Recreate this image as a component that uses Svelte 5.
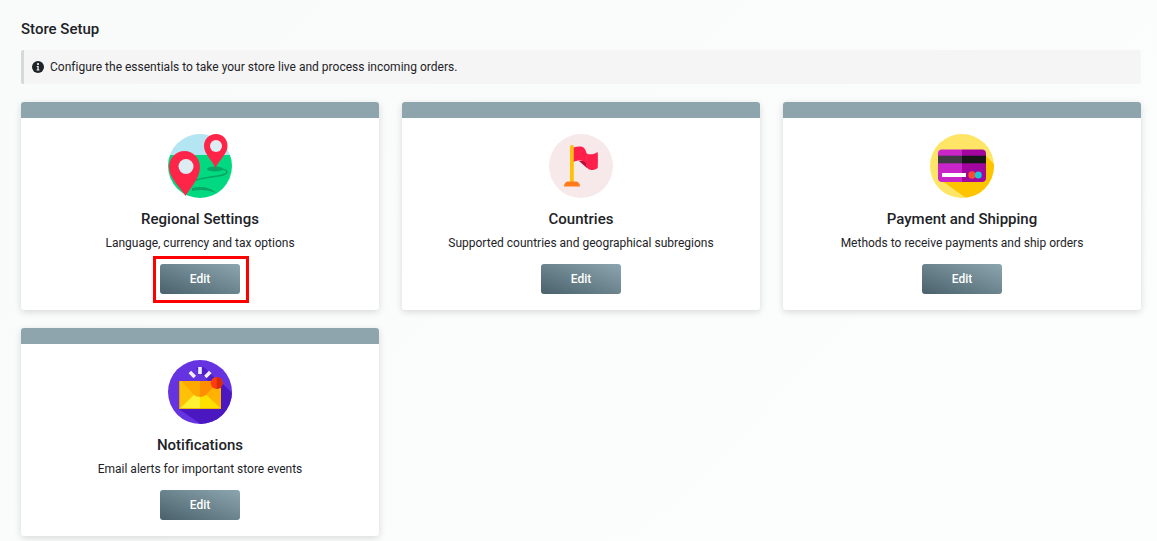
<script>
	const cards = [
		{ id: 'regional', title: 'Regional Settings', text: 'Language, currency and tax options', marked: true },
		{ id: 'countries', title: 'Countries', text: 'Supported countries and geographical subregions' },
		{ id: 'payment', title: 'Payment and Shipping', text: 'Methods to receive payments and ship orders' },
		{ id: 'notifications', title: 'Notifications', text: 'Email alerts for important store events' }
	];
</script>

<main>
	<h1>Store Setup</h1>
	<p class="notice">
		<svg class="info" viewBox="0 0 12 12" width="12" height="12" aria-hidden="true">
			<circle cx="6" cy="6" r="6" fill="#1d2327" />
			<circle cx="6" cy="3.1" r="1.1" fill="#f5f5f5" />
			<path d="M4.7 5h2v3.6h.7v.9H4.600v-.9h.8V5.900h-.7z" fill="#f5f5f5" />
		</svg>
		Configure the essentials to take your store live and process incoming orders.
	</p>

	<div class="grid">
		{#each cards as card}
			<section class="card">
				<div class="bar"></div>
				<div class="body">
					<svg class="icon" viewBox="0 0 64 64" width="64" height="64" aria-hidden="true">
						<defs>
							<clipPath id="clip-{card.id}"><circle cx="32" cy="32" r="32" /></clipPath>
						</defs>
						{#if card.id === 'regional'}
							<g clip-path="url(#clip-regional)">
								<rect width="64" height="22" fill="#b3e5f2" />
								<rect y="21" width="64" height="43" fill="#00d980" />
								<path d="M50 35c6 0 9 1 9 3 0 3-8 4-16 5-7 1-13 2-18 4" fill="none" stroke="#0aa564" stroke-width="1.600" />
								<path d="M24 54c9-2 18-1 24 5-7-3-15-4-24-2z" fill="#0aa564" />
								<ellipse cx="47" cy="35" rx="8" ry="2.600" fill="#0aa564" />
							</g>
							<path d="M16.500 17C8 17 1 24 1 33c0 11 11 20 16.500 29C23 53 32 44 32 33c0-9-7-16-15.500-16z" fill="#ff2548" />
							<circle cx="18" cy="32.500" r="7.500" fill="#dcecf3" />
							<path d="M48 0c-7 0-12 5-12 12 0 8 8 14 11.500 22 3.500-8 12-14 12-22 0-7-4.500-12-11.500-12z" fill="#ff2548" />
							<circle cx="48" cy="12" r="6" fill="#dcecf3" />
						{:else if card.id === 'countries'}
							<circle cx="32" cy="32" r="32" fill="#f7e9ea" />
							<rect x="21" y="11" width="3.800" height="38" rx="1.800" fill="#ffc107" />
							<path d="M15 52.500c0-3 2-5 4-5h8c2 0 4 2 4 5z" fill="#ff7a1a" />
							<path d="M30 27h8v7z" fill="#b50d35" />
							<path d="M24.700 13.500c4.300-1.300 8.300-1.300 10.300.5 2 2 2 4.500 3 6l-.5 10c-1.500-2.500-4-3.500-7-3.500-2.200 0-4.300.5-5.800 1.500z" fill="#ff1f4b" />
							<path d="M37.500 19.500c3.500 1.500 7.500 1 11.200-1.500.3 5.500.3 11 0 16-2 1.500-4 2-6 2-2.500 0-4.500-1.500-5.700-4z" fill="#ff1f4b" />
						{:else if card.id === 'payment'}
							<circle cx="32" cy="32" r="32" fill="#ffe566" />
							<g clip-path="url(#clip-payment)">
								<path d="M56 22l10 10v32H36L8 44z" fill="#ffc400" />
							</g>
							<path d="M12 15.500h20V48H12c-2.500 0-4-1.500-4-4V19.500c0-2.500 1.500-4 4-4z" fill="#c925c9" />
							<path d="M32 15.500h20c2.500 0 4 1.500 4 4V44c0 2.500-1.500 4-4 4H32z" fill="#a3069f" />
							<rect x="8" y="21.700" width="24" height="7.600" fill="#3f3a44" />
							<rect x="32" y="21.700" width="24" height="7.600" fill="#171717" />
							<rect x="12" y="39" width="24" height="4" fill="#fff" />
							<circle cx="42" cy="41" r="3.700" fill="#ff4d2e" />
							<circle cx="48.300" cy="41" r="3.500" fill="#17c8d8" />
						{:else}
							<circle cx="32" cy="32" r="32" fill="#6633e0" />
							<g clip-path="url(#clip-notifications)">
								<path d="M53 22l13 13v30H34L11 49z" fill="#4a17c0" />
								<path d="M28 8l8-1 18 18-10 0z" fill="#4f1fc8" />
							</g>
							<rect x="30.200" y="7" width="3.600" height="7" fill="#f1efff" />
							<rect x="22.500" y="11" width="3.600" height="7" transform="rotate(-45 24.300 14.500)" fill="#f1efff" />
							<rect x="38" y="11" width="3.600" height="7" transform="rotate(45 39.800 14.500)" fill="#f1efff" />
							<rect x="11.300" y="21" width="41.700" height="28" fill="#ffc107" />
							<path d="M32 21h21v28H32z" fill="#ffb300" />
							<path d="M11.300 49 27 34h10l16 15z" fill="#fff033" />
							<path d="M32 34h5l16 15H32z" fill="#ffdf00" />
							<path d="M13.500 21H32v16c-2.500 0-5-1-7-3z" fill="#ffa800" />
							<path d="M32 21h18.500L39 34c-2 2-4.500 3-7 3z" fill="#ff8f00" />
							<path d="M11.300 21h.8v27.300h40.900v.7H11.300z" fill="#e8a200" />
							<circle cx="48.700" cy="23" r="6" fill="#ff3d12" />
							<path d="M48.700 17a6 6 0 0 1 0 12z" fill="#db2a06" />
						{/if}
					</svg>
					<h2>{card.title}</h2>
					<p>{card.text}</p>
					<div class="action">
						<button type="button">Edit</button>
						{#if card.marked}<span class="mark"></span>{/if}
					</div>
				</div>
			</section>
		{/each}
	</div>
</main>

<style>
	:global(body) {
		background: linear-gradient(135deg, #f9fbfb 0%, #fcfdfd 100%);
		font-family: Roboto, "Liberation Sans", sans-serif;
		color: #1d2327;
	}

	main {
		padding: 21px 16px 0 21px;
		height: 520px;
		overflow: hidden;
	}

	h1 {
		margin: 0 0 12px;
		font-size: 15px;
		line-height: 17px;
		font-weight: 500;
	}

	.notice {
		margin: 0 0 18px;
		height: 34px;
		display: flex;
		align-items: center;
		gap: 6px;
		padding-left: 8px;
		background: #f5f5f5;
		border-left: 3px solid #d8d8d8;
		border-radius: 2px;
		font-size: 12px;
		letter-spacing: 0.006px;
	}

	.grid {
		display: grid;
		grid-template-columns: repeat(3, 358px);
		column-gap: 23px;
		row-gap: 18px;
	}

	.card {
		height: 208px;
		background: #fff;
		border-radius: 3px;
		box-shadow: 0 2px 7px rgba(0, 0, 0, 0.14);
		overflow: hidden;
	}

	.bar {
		height: 16px;
		background: #8ea5ae;
	}

	.body {
		display: flex;
		flex-direction: column;
		align-items: center;
		padding-top: 16px;
	}

	.icon {
		display: block;
		overflow: visible;
	}

	h2 {
		margin: 12px 0 8px;
		font-size: 15px;
		line-height: 18px;
		font-weight: 500;
	}

	.body p {
		margin: 0 0 13px;
		font-size: 12px;
		line-height: 15px;
	}

	.action {
		position: relative;
	}

	button {
		display: block;
		width: 80px;
		height: 30px;
		padding: 0;
		border: 0;
		border-radius: 3px;
		background: linear-gradient(to top right, #4a616b, #8ca6b0);
		color: #fff;
		font: 500 12px Roboto, sans-serif;
	}

	.mark {
		position: absolute;
		inset: -8px -9px -9px -7px;
		border: 3px solid #f00;
		pointer-events: none;
	}
</style>
